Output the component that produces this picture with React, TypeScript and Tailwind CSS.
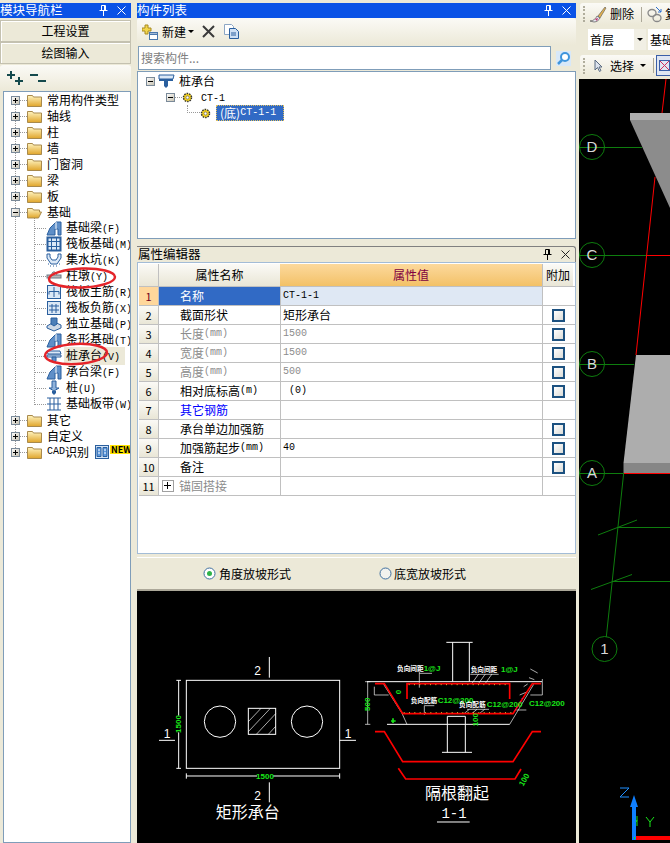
import type { ReactNode } from 'react'

const mono = "font-['Liberation_Mono',monospace] text-[10px]"

function M({ children }: { children: ReactNode }) {
  return <span className={mono}>{children}</span>
}

function Pin({ color = 'white' }: { color?: string }) {
  return (
    <svg width="9" height="11" viewBox="0 0 9 11" fill="none" stroke={color}>
      <path d="M2.5 .5h4v5h-4zM5.5 .5v5M.5 5.5h8M4.5 6v5" />
    </svg>
  )
}

function Close({ color = 'white' }: { color?: string }) {
  return (
    <svg width="9" height="9" viewBox="0 0 9 9" stroke={color}>
      <path d="M.5 .5l8 8M8.5 .5l-8 8" />
    </svg>
  )
}

function TitleBar({ title }: { title: string }) {
  return (
    <div className="flex h-[15px] shrink-0 items-center bg-[#0a52e6] text-[12.5px] leading-none text-white">
      <span className="flex-1">{title}</span>
      <Pin />
      <span className="ml-[9px] mr-[5px] flex">
        <Close />
      </span>
    </div>
  )
}

function Expander({ open = false }: { open?: boolean }) {
  return (
    <svg width="9" height="9" viewBox="0 0 9 9" className="shrink-0">
      <defs>
        <linearGradient id="exp" x1="0" y1="0" x2="1" y2="1">
          <stop offset="0" stopColor="#ffffff" />
          <stop offset="1" stopColor="#c4bfae" />
        </linearGradient>
      </defs>
      <rect x=".5" y=".5" width="8" height="8" fill="url(#exp)" stroke="#7a8a99" />
      <path d={open ? 'M2 4.5h5' : 'M2 4.5h5M4.5 2v5'} stroke="#000" />
    </svg>
  )
}

function Folder({ open = false }: { open?: boolean }) {
  return (
    <svg width="15" height="13" viewBox="0 0 15 13" className="shrink-0">
      <defs>
        <linearGradient id="fold" x1="0" y1="0" x2="0" y2="1">
          <stop offset="0" stopColor="#fff4c0" />
          <stop offset="1" stopColor="#e0a52a" />
        </linearGradient>
      </defs>
      {open ? (
        <path d="M.5 12V2.5h5l1 1.5h6v2h2l-3 6z" fill="url(#fold)" stroke="#a98a4c" />
      ) : (
        <path d="M.5 12.5v-11h5l1 1.5h8v9.5z" fill="url(#fold)" stroke="#a98a4c" />
      )}
    </svg>
  )
}

function KindIcon({ kind }: { kind: string }) {
  const blue = '#2a5f9e'
  const shapes: Record<string, ReactNode> = {
    beam: (
      <>
        <path d="M1 15l3-7 6-6h5v13h-3V9H9v6z" fill="#5f8fc8" stroke={blue} />
        <path d="M10 2v7" stroke="#fff" />
      </>
    ),
    raft: (
      <>
        <rect x="1.5" y="1.5" width="13" height="13" fill="#dbe8f6" stroke={blue} strokeWidth="2" />
        <path d="M5.5 2v12M10.5 2v12M2 5.5h12M2 10.5h12" stroke={blue} />
      </>
    ),
    pit: (
      <>
        <path d="M1 2h3v3l2 3h4l2-3V2h3v4l-4 6H5L1 6z" fill="#dbe8f6" stroke={blue} />
        <path d="M2 12h1M4 14h1M7 14h1M10 14h1M13 12h1" stroke={blue} />
      </>
    ),
    pier: (
      <>
        <rect x="1" y="7" width="14" height="3" fill="#b8b8b8" stroke="#6b7a88" />
        <path d="M5 7l2-3h2l2 3" fill="#ddd" stroke="#6b7a88" />
      </>
    ),
    plus: (
      <>
        <rect x="1.5" y="1.5" width="13" height="13" fill="#dbe8f6" stroke={blue} />
        <path d="M8 3v10M3 7.5h10M3 7.5v3M13 7.5v3" stroke={blue} />
      </>
    ),
    grid: (
      <>
        <rect x="1.5" y="1.5" width="13" height="13" fill="#dbe8f6" stroke={blue} />
        <path d="M3 6h10M3 10h10M6 4v9M10 4v9" stroke={blue} />
      </>
    ),
    solo: (
      <>
        <path d="M1 10l7-4 7 3v3l-7 3-7-3z" fill="#cfd9e6" stroke={blue} />
        <path d="M5 2h6v6l-3 2-3-2z" fill="#4d7fb8" stroke={blue} />
      </>
    ),
    cap: (
      <>
        <path d="M1 3h13l1 3H2z" fill="#dbe8f6" stroke={blue} />
        <path d="M1 7h14v2H1z" fill="#dbe8f6" stroke={blue} />
        <path d="M6 9h4v4l-2 2-2-2z" fill="#5f8fc8" stroke={blue} />
      </>
    ),
    pile: (
      <>
        <path d="M6 1h4v7h3l-5 3-5-3h3z" fill="#8fb2da" stroke={blue} />
        <path d="M6 11h4v2l-2 2-2-2z" fill="#2a5f9e" />
      </>
    ),
    strip: (
      <>
        <path d="M1 2h14M1 14h14M4 2v12M8 2v12M12 2v12M1 8h14" stroke={blue} fill="none" />
      </>
    ),
  }
  return (
    <svg width="16" height="16" viewBox="0 0 16 16" className="shrink-0">
      {shapes[kind]}
    </svg>
  )
}

function FolderRow({ label, open }: { label: ReactNode; open?: boolean }) {
  return (
    <div className="relative flex h-4 items-center whitespace-nowrap pl-[7px]">
      <Expander open={open} />
      <span className="w-[7px] shrink-0 border-t border-dotted border-[#999]" />
      <Folder open={open} />
      <span className="ml-[5px]">{label}</span>
    </div>
  )
}

function ChildRow({ kind, name, hot, selected }: { kind: string; name: string; hot: string; selected?: boolean }) {
  return (
    <div className="relative flex h-4 items-center whitespace-nowrap pl-[31px]">
      <span className="w-[11px] shrink-0 border-t border-dotted border-[#999]" />
      <KindIcon kind={kind} />
      <span className={selected ? 'ml-[2px] bg-[#ece9d8] py-[2px] pl-[2px] pr-[5px]' : 'ml-[4px]'}>
        {name}
        <M>({hot})</M>
      </span>
    </div>
  )
}

const folders1 = ['常用构件类型', '轴线', '柱', '墙', '门窗洞', '梁', '板']
const children = [
  ['beam', '基础梁', 'F'],
  ['raft', '筏板基础', 'M'],
  ['pit', '集水坑', 'K'],
  ['pier', '柱墩', 'Y'],
  ['plus', '筏板主筋', 'R'],
  ['grid', '筏板负筋', 'X'],
  ['solo', '独立基础', 'P'],
  ['beam', '条形基础', 'T'],
  ['cap', '桩承台', 'V'],
  ['beam', '承台梁', 'F'],
  ['pile', '桩', 'U'],
  ['strip', '基础板带', 'W'],
]

function NavPanel() {
  return (
    <div className="relative flex w-[131px] shrink-0 flex-col pt-[3px]">
      <TitleBar title="模块导航栏" />
      <div className="mt-[2px] flex h-[22px] shrink-0 items-center justify-center border border-[#c4c1b0] bg-[#ece9d8] shadow-[inset_1px_1px_0_#fff]">
        工程设置
      </div>
      <div className="flex h-[22px] shrink-0 items-center justify-center border border-[#c4c1b0] bg-[#ece9d8] shadow-[inset_1px_1px_0_#fff]">
        绘图输入
      </div>
      <div className="mt-[1px] flex h-[26px] shrink-0 items-center gap-[7px] rounded-t-[3px] bg-gradient-to-b from-[#fbfaf6] to-[#ece9d8] pl-[7px]">
        <svg width="16" height="14" viewBox="0 0 16 14" fill="none" stroke="#14494c" strokeWidth="2">
          <path d="M0 4h8M4 0v8M8 10h8M12 6v8" />
        </svg>
        <svg width="16" height="10" viewBox="0 0 16 10" fill="none" stroke="#14494c" strokeWidth="2">
          <path d="M0 2h8M8 8h8" />
        </svg>
      </div>
      <div className="relative ml-[3px] flex-1 overflow-hidden border border-[#7f9db9] bg-white">
        <div className="absolute left-[11px] top-[8px] h-[352px] border-l border-dotted border-[#999]" />
        <div className="absolute left-[30px] top-[124px] h-[189px] border-l border-dotted border-[#999]" />
        {folders1.map((f) => (
          <FolderRow key={f} label={f} />
        ))}
        <FolderRow label="基础" open />
        {children.map(([kind, name, hot]) => (
          <ChildRow key={name + hot} kind={kind} name={name} hot={hot} selected={name === '桩承台'} />
        ))}
        <FolderRow label="其它" />
        <FolderRow label="自定义" />
        <FolderRow
          label={
            <span className="flex items-center">
              <M>CAD</M>识别
              <svg width="14" height="14" viewBox="0 0 14 14" className="ml-[6px] shrink-0">
                <rect x=".5" y=".5" width="13" height="13" fill="#d5e5f7" stroke="#2a5f9e" />
                <path d="M2 2.5h4v9H2zM8 2.5h4v9H8z" fill="#5f9be0" stroke="#2a5f9e" />
                <path d="M3 5h2M3 8h2M9 5h2M9 8h2" stroke="#fff" />
              </svg>
              <span className="mb-[5px] ml-[1px] bg-[#ffe400] px-[1px] text-[9px] font-bold leading-[9px]">NEW</span>
            </span>
          }
        />
      </div>
      {/* red marks somebody drew over the screenshot */}
      <svg className="absolute left-0 top-0" width="131" height="400" fill="none" stroke="#e4242a" strokeWidth="2.5">
        <ellipse cx="82" cy="278" rx="33" ry="9.5" transform="rotate(-2 82 278)" />
        <ellipse cx="76" cy="354" rx="31" ry="10" transform="rotate(-3 76 354)" />
      </svg>
    </div>
  )
}

function ListPanel() {
  return (
    <>
      <TitleBar title="构件列表" />
      <div className="flex h-[27px] shrink-0 items-center rounded-t-[3px] bg-gradient-to-b from-[#fbfaf6] to-[#ece9d8] pl-[5px]">
        <svg width="16" height="16" viewBox="0 0 16 16">
          <path d="M3 1h3v3h3v3H6v3H3V7H0V4h3z" fill="#f2d64c" stroke="#a88a20" />
          <rect x="7.5" y="8.5" width="8" height="7" fill="#fff" stroke="#4a78ad" />
          <path d="M8 9.5h7v1.5H8z" fill="#4a78ad" />
        </svg>
        <span className="ml-[4px]">新建</span>
        <span className="ml-[2px] h-0 w-0 border-x-[3px] border-t-[3px] border-x-transparent border-t-black" />
        <svg width="13" height="13" viewBox="0 0 13 13" className="ml-[8px]" stroke="#3a3a3a" strokeWidth="2">
          <path d="M1 1l11 11M12 1L1 12" />
        </svg>
        <svg width="15" height="15" viewBox="0 0 15 15" className="ml-[9px]">
          <path d="M.5 .5h7l2 2v8h-9z" fill="#fff" stroke="#8ca6c4" />
          <path d="M5.5 4.5h6l3 3v7h-9z" fill="#cfe0f4" stroke="#2a5f9e" />
          <path d="M7 9h5M7 11h5" stroke="#2a5f9e" />
        </svg>
      </div>
      <div className="flex h-[26px] shrink-0 items-center">
        <div className="ml-[1px] flex h-[24px] w-[413px] items-center border border-[#7f9db9] bg-white pl-[2px] text-[#808080]">
          搜索构件...
        </div>
        <svg width="15" height="15" viewBox="0 0 15 15" className="ml-[5px] bg-[#d8e8f8]" fill="none">
          <circle cx="9" cy="6" r="4" stroke="#3f95dc" strokeWidth="2" fill="#fff" />
          <path d="M6 9l-4 4" stroke="#3f95dc" strokeWidth="2.5" />
        </svg>
      </div>
      <div className="flex h-[168px] shrink-0 flex-col border border-[#7f9db9] bg-white pt-[1px]">
        <div className="flex h-4 items-center pl-[8px]">
          <Expander open />
          <svg width="17" height="15" viewBox="0 0 17 15" className="ml-[3px]">
            <path d="M1 1h15l-1 4H1z" fill="#dbe8f6" stroke="#2a5f9e" />
            <path d="M1 5h14v2H1z" fill="#2a5f9e" />
            <path d="M6 7h4v5l-2 2-2-2z" fill="#2a5f9e" />
          </svg>
          <span className="ml-[4px]">桩承台</span>
        </div>
        <div className="flex h-4 items-center pl-[28px]">
          <Expander open />
          <span className="w-[7px] border-t border-dotted border-[#999]" />
          <Gear />
          <span className="ml-[8px]">
            <M>CT-1</M>
          </span>
        </div>
        <div className="flex h-4 items-center pl-[49px]">
          <span className="h-[8px] w-[13px] self-start border-b border-l border-dotted border-[#999]" />
          <Gear />
          <span className="ml-[5px] flex h-4 w-[68px] items-center border border-dotted border-[#e0c060] bg-[#316ac5] pl-[3px] text-white">
            (底)
            <M>CT-1-1</M>
          </span>
        </div>
      </div>
    </>
  )
}

function Gear() {
  return (
    <svg width="11" height="11" viewBox="0 0 11 11" className="shrink-0">
      <circle cx="5.5" cy="5.5" r="4" fill="#f4d21f" stroke="#333" strokeDasharray="1.5 1" strokeWidth="1.5" />
      <circle cx="5.5" cy="5.5" r="1.5" fill="#fff" stroke="#555" strokeWidth=".6" />
    </svg>
  )
}

function Check() {
  return (
    <span className="block h-[13px] w-[13px] border-2 border-[#1c5180] bg-gradient-to-br from-white to-[#dcdcd7]" />
  )
}

type Row = { name: ReactNode; value?: ReactNode; tone?: 'grey' | 'blue'; check?: boolean }

const rows: Row[] = [
  { name: '名称', value: <M>CT-1-1</M> },
  { name: '截面形状', value: '矩形承台', check: true },
  { name: <>长度<M>(mm)</M></>, value: <M>1500</M>, tone: 'grey', check: true },
  { name: <>宽度<M>(mm)</M></>, value: <M>1500</M>, tone: 'grey', check: true },
  { name: <>高度<M>(mm)</M></>, value: <M>500</M>, tone: 'grey', check: true },
  { name: <>相对底标高<M>(m)</M></>, value: <M>&nbsp;(0)</M>, check: true },
  { name: '其它钢筋', tone: 'blue' },
  { name: '承台单边加强筋', check: true },
  { name: <>加强筋起步<M>(mm)</M></>, value: <M>40</M>, check: true },
  { name: '备注', check: true },
  { name: '锚固搭接', tone: 'grey' },
]

const gridCols = 'grid grid-cols-[20px_121px_262px_31px]'

function PropertyPanel() {
  return (
    <>
      <div className="mt-[7px] flex h-[16px] shrink-0 items-center rounded-tr-[3px] border-t border-r border-[#808080] text-[12.5px] leading-none">
        <span className="flex-1 pl-[1px]">属性编辑器</span>
        <Pin color="#000" />
        <span className="ml-[9px] mr-[5px] flex">
          <Close color="#222" />
        </span>
      </div>
      <div className="flex h-[292px] shrink-0 flex-col border border-[#a3bcd6] bg-white pl-[1px] pt-[1px]">
        <div className={`${gridCols} h-[23px] shrink-0 border-b border-[#c0c0c0]`}>
          <span className="border-r border-[#c0c0c0] bg-gradient-to-b from-[#fbfaf6] to-[#e9e6d6]" />
          <span className="flex items-center justify-center bg-gradient-to-b from-[#fbfaf6] to-[#e9e6d6]">属性名称</span>
          <span className="flex items-center justify-center bg-gradient-to-b from-[#fcd99c] to-[#f3c166] text-[#800040]">属性值</span>
          <span className="flex items-center justify-center border-l border-[#c0c0c0] bg-gradient-to-b from-[#fbfaf6] to-[#e9e6d6]">附加</span>
        </div>
        {rows.map((r, i) => {
          const first = i === 0
          const color = r.tone === 'grey' ? 'text-[#8c8c8c]' : r.tone === 'blue' ? 'text-[#0000ff]' : ''
          return (
            <div key={i} className={`${gridCols} h-[19px] shrink-0 border-b border-[#c0c0c0]`}>
              <span
                className={`flex items-center justify-center border-r border-[#c0c0c0] text-[11px] ${
                  first ? 'bg-[#ffd79b] text-[#700020]' : 'bg-gradient-to-b from-[#fbfaf6] to-[#e9e6d6]'
                }`}
              >
                {i + 1}
              </span>
              <span className={`flex items-center ${first ? 'bg-[#316ac5] pl-[21px] text-white' : `pl-[21px] ${color}`}`}>
                {i === 10 && (
                  <span className="-ml-[18px] mr-[5px] flex h-[12px] w-[12px] items-center justify-center border border-[#a0a0a0] text-black">
                    <svg width="8" height="8" viewBox="0 0 8 8" stroke="#000">
                      <path d="M0 3.5h7M3.5 0v7" />
                    </svg>
                  </span>
                )}
                {r.name}
              </span>
              <span className={`flex items-center border-l border-[#c0c0c0] pl-[2px] ${first ? 'bg-[#dfe8f4]' : ''} ${r.tone === 'grey' ? 'text-[#8c8c8c]' : ''}`}>
                {r.value}
              </span>
              <span className="flex items-center justify-center border-l border-[#c0c0c0]">{r.check && <Check />}</span>
            </div>
          )
        })}
      </div>
      <div className="mt-[3px] flex h-[34px] shrink-0 items-center border-t border-b-2 border-t-white border-b-[#aca899] pl-[66px]">
        <svg width="13" height="13" viewBox="0 0 13 13">
          <circle cx="6.5" cy="6.5" r="5.5" fill="#fff" stroke="#3f6f9f" />
          <circle cx="6.5" cy="6.5" r="2.5" fill="#2fb34a" />
        </svg>
        <span className="ml-[3px]">角度放坡形式</span>
        <svg width="13" height="13" viewBox="0 0 13 13" className="ml-[88px]">
          <circle cx="6.5" cy="6.5" r="5.5" fill="#f2f2ee" stroke="#3f6f9f" />
        </svg>
        <span className="ml-[2px]">底宽放坡形式</span>
      </div>
    </>
  )
}

function Preview() {
  const w = { stroke: '#fff', fill: 'none', strokeWidth: 3 }
  const g = { fill: '#19e619', fontSize: 24, fontWeight: 700, fontFamily: 'Liberation Sans, sans-serif' }
  const n = { fill: '#fff', fontSize: 36, fontFamily: 'Liberation Sans, sans-serif' }
  const small = { fill: '#fff', fontSize: 20, fontWeight: 700 }
  return (
    <svg viewBox="0 0 439 252" className="block h-[252px] w-[439px] shrink-0 bg-black">
      <g transform="translate(0 -36) scale(0.33333)">
        <rect x="148" y="376" width="460" height="264" {...w} />
        <circle cx="249" cy="500" r="47" {...w} />
        <circle cx="510" cy="500" r="47" {...w} />
        <rect x="334" y="460" width="82" height="78" {...w} />
        <path d="M334 500l38-40M334 530l66-70M358 538l58-62M394 538l22-24" {...w} strokeWidth="2" />
        <path d="M397 306v62M397 682v60M66 556h48M608 556h49" {...w} />
        <text x="362" y="360" textAnchor="middle" {...n}>2</text>
        <text x="362" y="734" textAnchor="middle" {...n}>2</text>
        <text x="90" y="548" textAnchor="middle" {...n}>1</text>
        <text x="633" y="548" textAnchor="middle" {...n}>1</text>
        <path d="M125 376v264M118 376h14M118 640h14M148 663h460M148 655v16M608 655v16" {...w} />
        <rect x="115" y="482" width="20" height="50" fill="#000" />
        <rect x="360" y="654" width="48" height="20" fill="#000" />
        <text x="125" y="507" textAnchor="middle" dominantBaseline="middle" transform="rotate(-90 125 507)" {...g}>1500</text>
        <text x="384" y="672" textAnchor="middle" {...g}>1500</text>
        <text x="332" y="790" textAnchor="middle" fill="#fff" fontSize="48">矩形承台</text>
      </g>
      <g transform="translate(220 -36) scale(0.33333)">
        <path d="M30 380h525M90 508h368M287 262v118M337 262v118M268 262h79M271 484v108M325 484v108M271 484h54M255 592h90" {...w} />
        <path d="M32 380v128M24 380h16M24 508h16M52 395v25M52 420h43M80 388l55 87 15 33M530 388l-72 120M556 372v48M520 420h36M187 350v48M187 355h38M202 480v-28h30M345 385l20-28M365 385l20-28M385 385l20-28M340 358h85M322 475l15-12M345 475l15-12M368 475l15-12M330 463h66M478 465h30M500 395l12-8M488 420l24-10M520 342l22 12M516 368l16 6" {...w} strokeWidth="2" />
        <path d="M150 432v-46h308v46" stroke="#f00" strokeWidth="5" fill="none" />
        <path d="M54 386h28l55 90h331l58-90h26M54 530h28l55 90h331l58-90h26M124 640l22 32h328l18-30" stroke="#f00" strokeWidth="5" fill="none" />
        <path d="M155 389h300M140 473h325" stroke="#ffe040" strokeWidth="2.5" strokeDasharray="3 13" />
        <path d="M474 466l24-40" stroke="#e020e0" strokeWidth="2.5" strokeDasharray="3 7" />
        <text x="120" y="349" {...small}>负向间距</text>
        <text x="200" y="349" {...g}>1@J</text>
        <text x="341" y="351" {...small}>负向间距</text>
        <text x="432" y="351" {...g}>1@J</text>
        <text x="161" y="444" {...small}>负向配筋</text>
        <text x="242" y="444" {...g}>C12@200</text>
        <text x="306" y="457" {...small}>负向配筋</text>
        <text x="389" y="457" {...g}>C12@200</text>
        <text x="516" y="453" {...g}>C12@200</text>
        <text x="32" y="448" textAnchor="middle" dominantBaseline="middle" transform="rotate(-90 32 448)" {...g}>500</text>
        <text x="125" y="411" textAnchor="middle" dominantBaseline="middle" transform="rotate(-90 125 411)" {...g}>0</text>
        <text x="358" y="494" textAnchor="middle" dominantBaseline="middle" transform="rotate(-90 358 494)" {...g}>100</text>
        <text x="503" y="675" textAnchor="middle" dominantBaseline="middle" transform="rotate(-60 503 675)" {...g}>100</text>
        <path d="M102 498h14M108 490v14" stroke="#19e619" strokeWidth="5" />
        <text x="300" y="732" textAnchor="middle" fill="#fff" fontSize="48">隔根翻起</text>
        <text x="291" y="788" textAnchor="middle" fill="#fff" fontSize="42" fontFamily="Liberation Mono, monospace">1-1</text>
        <path d="M240 801h98" {...w} />
      </g>
    </svg>
  )
}

function Grip() {
  return <span className="ml-[3px] h-[16px] w-[3px] shrink-0 border-l-2 border-dotted border-[#b0ad9c]" />
}

function ModelView() {
  const green = '#0e7d0e'
  const label = { fill: '#d8d8d8', fontSize: 15, textAnchor: 'middle' as const, fontFamily: 'Liberation Sans, sans-serif' }
  return (
    <svg viewBox="579 79 91 764" className="block h-[764px] w-[91px] shrink-0 bg-black">
      <path d="M630 113h40v7h-40z" fill="#adadad" />
      <path d="M630 120h40v88z" fill="#8c8c8c" />
      <path d="M636 355h34v108h-46.500z" fill="#adadad" />
      <path d="M623.500 463H670v10h-46.500z" fill="#868686" />
      <g fill="none" stroke={green}>
        <path d="M579 147.500h63M579 255.500h68M579 364.500h55M579 473.500h45M623.700 473l-17.400 164M598 535l39-15M617 527.500h53M591 589.500l41-15M612 581.500h58" />
        <circle cx="592" cy="147" r="12.500" />
        <circle cx="592" cy="255" r="12.500" />
        <circle cx="592" cy="364" r="12.500" />
        <circle cx="592" cy="473" r="12.500" />
        <circle cx="604.500" cy="649" r="12.500" />
      </g>
      <path d="M666 79l-4 34M655 177l-19 178M647 255.500h23M624 473.500h46" stroke="#f00" fill="none" />
      <text x="592" y="152" {...label}>D</text>
      <text x="592" y="260" {...label}>C</text>
      <text x="592" y="369" {...label}>B</text>
      <text x="592" y="478" {...label}>A</text>
      <text x="604.500" y="654" {...label}>1</text>
      <path d="M635 838h35" stroke="#f00" strokeWidth="4" />
      <path d="M634 795l4 12h-2v33h-4v-33h-2z" fill="#0f7fff" />
      <path d="M637 826v-10M637 820l-1 2" stroke="#19e619" fill="none" />
      <path d="M634 838h1" stroke="#19e619" strokeWidth="2" />
      <path d="M620 788h9l-9 9h9" stroke="#1f8fff" fill="none" />
      <path d="M646 817l4 5 4-5M650 822v5" stroke="#19e619" fill="none" />
    </svg>
  )
}

function RightPane() {
  return (
    <div className="ml-[3px] flex w-[91px] shrink-0 flex-col overflow-hidden pt-[3px]">
      <div className="ml-[1px] flex h-[22px] shrink-0 items-center whitespace-nowrap rounded-l-[3px] bg-gradient-to-b from-[#fbfaf6] to-[#ece9d8]">
        <Grip />
        <svg width="18" height="18" viewBox="0 0 18 18" className="ml-[3px] shrink-0">
          <path d="M9 11l7-9 1 1-6 10z" fill="#e0b050" stroke="#555" strokeWidth=".6" />
          <path d="M1 16c4 0 6-3 7-5l3 2c-1 2-3 4-6 4z" fill="#e6e6f0" stroke="#555" strokeWidth=".7" />
          <path d="M6 14l3-1-1 3z" fill="#c0306a" />
        </svg>
        <span className="ml-[3px]">删除</span>
        <span className="ml-[7px] h-[15px] w-px shrink-0 bg-[#aca899]" />
        <svg width="15" height="17" viewBox="0 0 15 17" className="ml-[5px] shrink-0" fill="none">
          <ellipse cx="5" cy="7" rx="4" ry="3.500" stroke="#888" strokeWidth="1.300" />
          <ellipse cx="10" cy="12" rx="4" ry="3.500" stroke="#888" strokeWidth="1.300" />
          <path d="M9 1l5 5M14 3v3h-3" stroke="#2a6fd0" />
        </svg>
        <span className="ml-[3px]">复</span>
      </div>
      <div className="ml-[1px] mt-[4px] flex h-[21px] shrink-0 items-center whitespace-nowrap bg-[#ece9d8]">
        <span className="ml-[8px] flex h-full w-[46px] shrink-0 items-center bg-white pl-[2px]">首层</span>
        <span className="flex h-full w-[12px] shrink-0 items-center justify-center bg-[#f1efe4]">
          <span className="h-0 w-0 border-x-[3px] border-t-[3px] border-x-transparent border-t-black" />
        </span>
        <span className="ml-[2px] flex h-full flex-1 items-center bg-white pl-[2px]">基础</span>
      </div>
      <div className="ml-[1px] mb-[3px] mt-[5px] flex h-[21px] shrink-0 items-center whitespace-nowrap rounded-l-[3px] bg-gradient-to-b from-[#fbfaf6] to-[#ece9d8]">
        <Grip />
        <svg width="9" height="13" viewBox="0 0 9 13" className="ml-[8px] shrink-0">
          <path d="M1 1v10l2.500-2.500 2 4 1.500-1-2-3.500h3z" fill="#dde4ef" stroke="#5a6a80" />
        </svg>
        <span className="ml-[7px]">选择</span>
        <span className="ml-[6px] h-0 w-0 shrink-0 border-x-[3px] border-t-[3px] border-x-transparent border-t-black" />
        <span className="ml-[7px] h-[15px] w-px shrink-0 bg-[#aca899]" />
        <span className="ml-[2px] flex h-[21px] w-[16px] shrink-0 items-center justify-center border border-[#3a5fa8] bg-[#dfe6f2]">
          <svg width="11" height="11" viewBox="0 0 11 11" fill="none">
            <rect x=".5" y=".5" width="10" height="10" stroke="#3a5fa8" />
            <path d="M1 1l9 9M10 1l-9 9" stroke="#d0305a" />
          </svg>
        </span>
      </div>
      <ModelView />
    </div>
  )
}

export default function App() {
  return (
    <div className="flex h-[843px] w-[670px] overflow-hidden bg-[#ece9d8] font-['Noto_Sans_CJK_SC','Liberation_Sans',sans-serif] text-[12px] leading-none text-black">
      <NavPanel />
      <div className="ml-[6px] flex w-[439px] shrink-0 flex-col pt-[3px]">
        <ListPanel />
        <PropertyPanel />
        <Preview />
      </div>
      <RightPane />
    </div>
  )
}
